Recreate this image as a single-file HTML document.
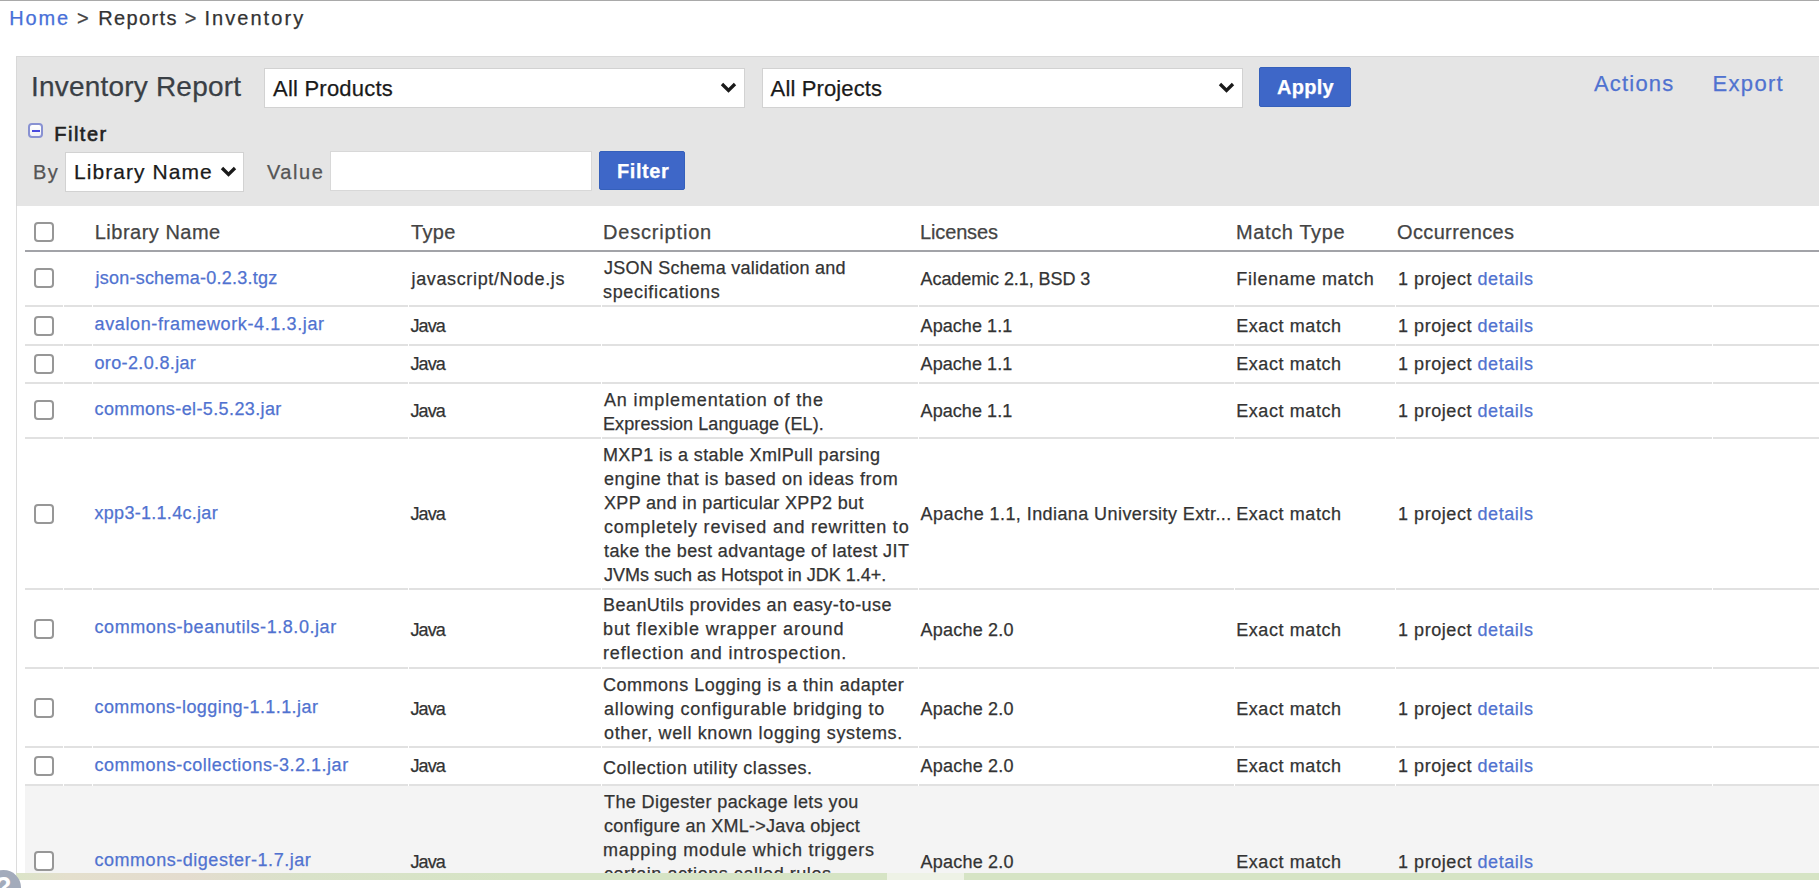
<!DOCTYPE html>
<html><head><meta charset="utf-8"><style>
html,body{margin:0;padding:0;background:#fff;width:1819px;height:888px;overflow:hidden;position:relative}
.t{position:absolute;white-space:nowrap;font-family:"Liberation Sans", sans-serif;-webkit-text-stroke:0.25px currentColor}
.r{position:absolute}
</style></head><body>
<div class="r" style="left:0px;top:0px;width:1819px;height:1px;background:#a9a9a9"></div>
<div class="t" style="left:9.2px;top:8px;font-size:20px;line-height:20px;color:#4870d8;font-weight:400;letter-spacing:1.90px;">Home</div>
<div class="t" style="left:76.9px;top:8px;font-size:20px;line-height:20px;color:#444;font-weight:400;letter-spacing:0.40px;">&gt;</div>
<div class="t" style="left:98.3px;top:8px;font-size:20px;line-height:20px;color:#333;font-weight:400;letter-spacing:1.35px;">Reports</div>
<div class="t" style="left:184.7px;top:8px;font-size:20px;line-height:20px;color:#444;font-weight:400;letter-spacing:0.40px;">&gt;</div>
<div class="t" style="left:204.4px;top:8px;font-size:20px;line-height:20px;color:#333;font-weight:400;letter-spacing:2.06px;">Inventory</div>
<div class="r" style="left:16px;top:56px;width:1803px;height:150px;background:#e5e5e5;border-top:1px solid #d8d8d8;border-left:1px solid #d8d8d8;box-sizing:border-box"></div>
<div class="r" style="left:16px;top:206px;width:1px;height:668px;background:#dcdcdc"></div>
<div class="t" style="left:31.0px;top:73px;font-size:28px;line-height:28px;color:#3a3f45;font-weight:400;letter-spacing:0.20px;">Inventory Report</div>
<div class="r" style="left:264px;top:68px;width:481px;height:40px;background:#fff;border:1px solid #d2d2d2;box-sizing:border-box"></div>
<div class="t" style="left:273.0px;top:78px;font-size:22px;line-height:22px;color:#1a1a1a;font-weight:400;letter-spacing:0.22px;">All Products</div>
<svg class="r" style="left:720px;top:82px" width="17" height="12" viewBox="0 0 17 12"><path d="M2 2 L8.5 8.5 L15 2" fill="none" stroke="#1a1a1a" stroke-width="3.3"/></svg>
<div class="r" style="left:762px;top:68px;width:481px;height:40px;background:#fff;border:1px solid #d2d2d2;box-sizing:border-box"></div>
<div class="t" style="left:770.6px;top:78px;font-size:22px;line-height:22px;color:#1a1a1a;font-weight:400;letter-spacing:0.13px;">All Projects</div>
<svg class="r" style="left:1218px;top:82px" width="17" height="12" viewBox="0 0 17 12"><path d="M2 2 L8.5 8.5 L15 2" fill="none" stroke="#1a1a1a" stroke-width="3.3"/></svg>
<div class="r" style="left:1259px;top:67px;width:92px;height:40px;background:#3e67c8;border:1px solid #3560bb;border-radius:2px;box-sizing:border-box"></div>
<div class="t" style="left:1277.0px;top:77px;font-size:20px;line-height:20px;color:#fff;font-weight:700;letter-spacing:0.25px;">Apply</div>
<div class="t" style="left:1594.0px;top:73px;font-size:22px;line-height:22px;color:#5072d0;font-weight:400;letter-spacing:1.18px;">Actions</div>
<div class="t" style="left:1712.6px;top:73px;font-size:22px;line-height:22px;color:#5072d0;font-weight:400;letter-spacing:1.30px;">Export</div>
<div class="r" style="left:28px;top:123px;width:15px;height:15px;border:2px solid #8891d2;border-radius:4px;box-sizing:border-box;background:linear-gradient(#fff,#f0f0f6)"></div>
<div class="r" style="left:32px;top:130px;width:8px;height:2px;background:#4a4ade"></div>
<div class="t" style="left:54.2px;top:124px;font-size:20px;line-height:20px;color:#222;font-weight:400;letter-spacing:1.52px;-webkit-text-stroke:0.6px #222">Filter</div>
<div class="t" style="left:33.1px;top:162px;font-size:20px;line-height:20px;color:#555;font-weight:400;letter-spacing:1.40px;">By</div>
<div class="r" style="left:65px;top:152px;width:179px;height:40px;background:#fff;border:1px solid #d2d2d2;box-sizing:border-box"></div>
<div class="t" style="left:74.1px;top:161px;font-size:21px;line-height:21px;color:#1a1a1a;font-weight:400;letter-spacing:1.05px;">Library Name</div>
<svg class="r" style="left:219.5px;top:166px" width="17" height="12" viewBox="0 0 17 12"><path d="M2 2 L8.5 8.5 L15 2" fill="none" stroke="#1a1a1a" stroke-width="3.3"/></svg>
<div class="t" style="left:266.9px;top:162px;font-size:20px;line-height:20px;color:#555;font-weight:400;letter-spacing:1.60px;">Value</div>
<div class="r" style="left:330px;top:151px;width:262px;height:40px;background:#fff;border:1px solid #d8d8d8;box-sizing:border-box"></div>
<div class="r" style="left:599px;top:151px;width:86px;height:39px;background:#3e67c8;border:1px solid #3560bb;border-radius:2px;box-sizing:border-box"></div>
<div class="t" style="left:617.0px;top:161px;font-size:20px;line-height:20px;color:#fff;font-weight:700;letter-spacing:0.56px;">Filter</div>
<div class="r" style="left:34px;top:222px;width:20px;height:20px;border:2px solid #979797;border-radius:4px;box-sizing:border-box;background:#fff"></div>
<div class="t" style="left:94.7px;top:222px;font-size:20px;line-height:20px;color:#444;font-weight:400;letter-spacing:0.50px;">Library Name</div>
<div class="t" style="left:411.0px;top:222px;font-size:20px;line-height:20px;color:#444;font-weight:400;letter-spacing:0.33px;">Type</div>
<div class="t" style="left:603.0px;top:222px;font-size:20px;line-height:20px;color:#444;font-weight:400;letter-spacing:0.82px;">Description</div>
<div class="t" style="left:920.0px;top:222px;font-size:20px;line-height:20px;color:#444;font-weight:400;letter-spacing:-0.14px;">Licenses</div>
<div class="t" style="left:1236.0px;top:222px;font-size:20px;line-height:20px;color:#444;font-weight:400;letter-spacing:0.62px;">Match Type</div>
<div class="t" style="left:1397.0px;top:222px;font-size:20px;line-height:20px;color:#444;font-weight:400;letter-spacing:0.36px;">Occurrences</div>
<div class="r" style="left:25px;top:250px;width:1794px;height:2px;background:#a2a3a8"></div>
<div class="r" style="left:0;top:0;width:1819px;height:873px;overflow:hidden">
<div class="r" style="left:34px;top:268px;width:20px;height:20px;border:2px solid #979797;border-radius:4px;box-sizing:border-box;background:#fff"></div>
<div class="t" style="left:95.5px;top:269px;font-size:18px;line-height:18px;color:#5072d0;font-weight:400;letter-spacing:0.23px;">json-schema-0.2.3.tgz</div>
<div class="t" style="left:411.5px;top:270px;font-size:18px;line-height:18px;color:#333;font-weight:400;letter-spacing:0.64px;">javascript/Node.js</div>
<div class="t" style="left:604.0px;top:259px;font-size:18px;line-height:18px;color:#333;font-weight:400;letter-spacing:0.26px;">JSON Schema validation and</div>
<div class="t" style="left:603.0px;top:283px;font-size:18px;line-height:18px;color:#333;font-weight:400;letter-spacing:0.66px;">specifications</div>
<div class="t" style="left:920.6px;top:270px;font-size:18px;line-height:18px;color:#333;font-weight:400;letter-spacing:-0.08px;">Academic 2.1, BSD 3</div>
<div class="t" style="left:1236.2px;top:270px;font-size:18px;line-height:18px;color:#333;font-weight:400;letter-spacing:0.74px;">Filename match</div>
<div class="t" style="left:1398.0px;top:270px;font-size:18px;line-height:18px;color:#333;font-weight:400;letter-spacing:0.55px;">1 project <span style="color:#5072d0">details</span></div>
<div class="r" style="left:25px;top:305px;width:38px;height:2px;background:#e1e1e1"></div>
<div class="r" style="left:64px;top:305px;width:28px;height:2px;background:#e1e1e1"></div>
<div class="r" style="left:93px;top:305px;width:315px;height:2px;background:#e1e1e1"></div>
<div class="r" style="left:409px;top:305px;width:192px;height:2px;background:#e1e1e1"></div>
<div class="r" style="left:602px;top:305px;width:316px;height:2px;background:#e1e1e1"></div>
<div class="r" style="left:919px;top:305px;width:315px;height:2px;background:#e1e1e1"></div>
<div class="r" style="left:1235px;top:305px;width:160px;height:2px;background:#e1e1e1"></div>
<div class="r" style="left:1396px;top:305px;width:316px;height:2px;background:#e1e1e1"></div>
<div class="r" style="left:1713px;top:305px;width:106px;height:2px;background:#e1e1e1"></div>
<div class="r" style="left:34px;top:316px;width:20px;height:20px;border:2px solid #979797;border-radius:4px;box-sizing:border-box;background:#fff"></div>
<div class="t" style="left:94.5px;top:315px;font-size:18px;line-height:18px;color:#5072d0;font-weight:400;letter-spacing:0.62px;">avalon-framework-4.1.3.jar</div>
<div class="t" style="left:410.5px;top:317px;font-size:18px;line-height:18px;color:#333;font-weight:400;letter-spacing:-0.93px;">Java</div>
<div class="t" style="left:920.6px;top:317px;font-size:18px;line-height:18px;color:#333;font-weight:400;letter-spacing:0.06px;">Apache 1.1</div>
<div class="t" style="left:1236.2px;top:317px;font-size:18px;line-height:18px;color:#333;font-weight:400;letter-spacing:0.59px;">Exact match</div>
<div class="t" style="left:1398.0px;top:317px;font-size:18px;line-height:18px;color:#333;font-weight:400;letter-spacing:0.55px;">1 project <span style="color:#5072d0">details</span></div>
<div class="r" style="left:25px;top:344px;width:38px;height:2px;background:#e1e1e1"></div>
<div class="r" style="left:64px;top:344px;width:28px;height:2px;background:#e1e1e1"></div>
<div class="r" style="left:93px;top:344px;width:315px;height:2px;background:#e1e1e1"></div>
<div class="r" style="left:409px;top:344px;width:192px;height:2px;background:#e1e1e1"></div>
<div class="r" style="left:602px;top:344px;width:316px;height:2px;background:#e1e1e1"></div>
<div class="r" style="left:919px;top:344px;width:315px;height:2px;background:#e1e1e1"></div>
<div class="r" style="left:1235px;top:344px;width:160px;height:2px;background:#e1e1e1"></div>
<div class="r" style="left:1396px;top:344px;width:316px;height:2px;background:#e1e1e1"></div>
<div class="r" style="left:1713px;top:344px;width:106px;height:2px;background:#e1e1e1"></div>
<div class="r" style="left:34px;top:354px;width:20px;height:20px;border:2px solid #979797;border-radius:4px;box-sizing:border-box;background:#fff"></div>
<div class="t" style="left:94.5px;top:354px;font-size:18px;line-height:18px;color:#5072d0;font-weight:400;letter-spacing:0.36px;">oro-2.0.8.jar</div>
<div class="t" style="left:410.5px;top:355px;font-size:18px;line-height:18px;color:#333;font-weight:400;letter-spacing:-0.93px;">Java</div>
<div class="t" style="left:920.6px;top:355px;font-size:18px;line-height:18px;color:#333;font-weight:400;letter-spacing:0.06px;">Apache 1.1</div>
<div class="t" style="left:1236.2px;top:355px;font-size:18px;line-height:18px;color:#333;font-weight:400;letter-spacing:0.59px;">Exact match</div>
<div class="t" style="left:1398.0px;top:355px;font-size:18px;line-height:18px;color:#333;font-weight:400;letter-spacing:0.55px;">1 project <span style="color:#5072d0">details</span></div>
<div class="r" style="left:25px;top:382px;width:38px;height:2px;background:#e1e1e1"></div>
<div class="r" style="left:64px;top:382px;width:28px;height:2px;background:#e1e1e1"></div>
<div class="r" style="left:93px;top:382px;width:315px;height:2px;background:#e1e1e1"></div>
<div class="r" style="left:409px;top:382px;width:192px;height:2px;background:#e1e1e1"></div>
<div class="r" style="left:602px;top:382px;width:316px;height:2px;background:#e1e1e1"></div>
<div class="r" style="left:919px;top:382px;width:315px;height:2px;background:#e1e1e1"></div>
<div class="r" style="left:1235px;top:382px;width:160px;height:2px;background:#e1e1e1"></div>
<div class="r" style="left:1396px;top:382px;width:316px;height:2px;background:#e1e1e1"></div>
<div class="r" style="left:1713px;top:382px;width:106px;height:2px;background:#e1e1e1"></div>
<div class="r" style="left:34px;top:400px;width:20px;height:20px;border:2px solid #979797;border-radius:4px;box-sizing:border-box;background:#fff"></div>
<div class="t" style="left:94.5px;top:400px;font-size:18px;line-height:18px;color:#5072d0;font-weight:400;letter-spacing:0.39px;">commons-el-5.5.23.jar</div>
<div class="t" style="left:410.5px;top:402px;font-size:18px;line-height:18px;color:#333;font-weight:400;letter-spacing:-0.93px;">Java</div>
<div class="t" style="left:604.0px;top:391px;font-size:18px;line-height:18px;color:#333;font-weight:400;letter-spacing:0.86px;">An implementation of the</div>
<div class="t" style="left:603.0px;top:415px;font-size:18px;line-height:18px;color:#333;font-weight:400;letter-spacing:0.11px;">Expression Language (EL).</div>
<div class="t" style="left:920.6px;top:402px;font-size:18px;line-height:18px;color:#333;font-weight:400;letter-spacing:0.06px;">Apache 1.1</div>
<div class="t" style="left:1236.2px;top:402px;font-size:18px;line-height:18px;color:#333;font-weight:400;letter-spacing:0.59px;">Exact match</div>
<div class="t" style="left:1398.0px;top:402px;font-size:18px;line-height:18px;color:#333;font-weight:400;letter-spacing:0.55px;">1 project <span style="color:#5072d0">details</span></div>
<div class="r" style="left:25px;top:437px;width:38px;height:2px;background:#e1e1e1"></div>
<div class="r" style="left:64px;top:437px;width:28px;height:2px;background:#e1e1e1"></div>
<div class="r" style="left:93px;top:437px;width:315px;height:2px;background:#e1e1e1"></div>
<div class="r" style="left:409px;top:437px;width:192px;height:2px;background:#e1e1e1"></div>
<div class="r" style="left:602px;top:437px;width:316px;height:2px;background:#e1e1e1"></div>
<div class="r" style="left:919px;top:437px;width:315px;height:2px;background:#e1e1e1"></div>
<div class="r" style="left:1235px;top:437px;width:160px;height:2px;background:#e1e1e1"></div>
<div class="r" style="left:1396px;top:437px;width:316px;height:2px;background:#e1e1e1"></div>
<div class="r" style="left:1713px;top:437px;width:106px;height:2px;background:#e1e1e1"></div>
<div class="r" style="left:34px;top:504px;width:20px;height:20px;border:2px solid #979797;border-radius:4px;box-sizing:border-box;background:#fff"></div>
<div class="t" style="left:94.5px;top:504px;font-size:18px;line-height:18px;color:#5072d0;font-weight:400;letter-spacing:0.29px;">xpp3-1.1.4c.jar</div>
<div class="t" style="left:410.5px;top:505px;font-size:18px;line-height:18px;color:#333;font-weight:400;letter-spacing:-0.93px;">Java</div>
<div class="t" style="left:603.0px;top:446px;font-size:18px;line-height:18px;color:#333;font-weight:400;letter-spacing:0.38px;">MXP1 is a stable XmlPull parsing</div>
<div class="t" style="left:604.0px;top:470px;font-size:18px;line-height:18px;color:#333;font-weight:400;letter-spacing:0.56px;">engine that is based on ideas from</div>
<div class="t" style="left:604.0px;top:494px;font-size:18px;line-height:18px;color:#333;font-weight:400;letter-spacing:0.33px;">XPP and in particular XPP2 but</div>
<div class="t" style="left:604.0px;top:518px;font-size:18px;line-height:18px;color:#333;font-weight:400;letter-spacing:0.78px;">completely revised and rewritten to</div>
<div class="t" style="left:604.0px;top:542px;font-size:18px;line-height:18px;color:#333;font-weight:400;letter-spacing:0.41px;">take the best advantage of latest JIT</div>
<div class="t" style="left:604.0px;top:566px;font-size:18px;line-height:18px;color:#333;font-weight:400;letter-spacing:-0.01px;">JVMs such as Hotspot in JDK 1.4+.</div>
<div class="t" style="left:920.6px;top:505px;font-size:18px;line-height:18px;color:#333;font-weight:400;letter-spacing:0.42px;">Apache 1.1, Indiana University Extr...</div>
<div class="t" style="left:1236.2px;top:505px;font-size:18px;line-height:18px;color:#333;font-weight:400;letter-spacing:0.59px;">Exact match</div>
<div class="t" style="left:1398.0px;top:505px;font-size:18px;line-height:18px;color:#333;font-weight:400;letter-spacing:0.55px;">1 project <span style="color:#5072d0">details</span></div>
<div class="r" style="left:25px;top:588px;width:38px;height:2px;background:#e1e1e1"></div>
<div class="r" style="left:64px;top:588px;width:28px;height:2px;background:#e1e1e1"></div>
<div class="r" style="left:93px;top:588px;width:315px;height:2px;background:#e1e1e1"></div>
<div class="r" style="left:409px;top:588px;width:192px;height:2px;background:#e1e1e1"></div>
<div class="r" style="left:602px;top:588px;width:316px;height:2px;background:#e1e1e1"></div>
<div class="r" style="left:919px;top:588px;width:315px;height:2px;background:#e1e1e1"></div>
<div class="r" style="left:1235px;top:588px;width:160px;height:2px;background:#e1e1e1"></div>
<div class="r" style="left:1396px;top:588px;width:316px;height:2px;background:#e1e1e1"></div>
<div class="r" style="left:1713px;top:588px;width:106px;height:2px;background:#e1e1e1"></div>
<div class="r" style="left:34px;top:619px;width:20px;height:20px;border:2px solid #979797;border-radius:4px;box-sizing:border-box;background:#fff"></div>
<div class="t" style="left:94.5px;top:618px;font-size:18px;line-height:18px;color:#5072d0;font-weight:400;letter-spacing:0.56px;">commons-beanutils-1.8.0.jar</div>
<div class="t" style="left:410.5px;top:621px;font-size:18px;line-height:18px;color:#333;font-weight:400;letter-spacing:-0.93px;">Java</div>
<div class="t" style="left:603.0px;top:596px;font-size:18px;line-height:18px;color:#333;font-weight:400;letter-spacing:0.45px;">BeanUtils provides an easy-to-use</div>
<div class="t" style="left:603.0px;top:620px;font-size:18px;line-height:18px;color:#333;font-weight:400;letter-spacing:0.90px;">but flexible wrapper around</div>
<div class="t" style="left:603.0px;top:644px;font-size:18px;line-height:18px;color:#333;font-weight:400;letter-spacing:0.83px;">reflection and introspection.</div>
<div class="t" style="left:920.6px;top:621px;font-size:18px;line-height:18px;color:#333;font-weight:400;letter-spacing:0.21px;">Apache 2.0</div>
<div class="t" style="left:1236.2px;top:621px;font-size:18px;line-height:18px;color:#333;font-weight:400;letter-spacing:0.59px;">Exact match</div>
<div class="t" style="left:1398.0px;top:621px;font-size:18px;line-height:18px;color:#333;font-weight:400;letter-spacing:0.55px;">1 project <span style="color:#5072d0">details</span></div>
<div class="r" style="left:25px;top:667px;width:38px;height:2px;background:#e1e1e1"></div>
<div class="r" style="left:64px;top:667px;width:28px;height:2px;background:#e1e1e1"></div>
<div class="r" style="left:93px;top:667px;width:315px;height:2px;background:#e1e1e1"></div>
<div class="r" style="left:409px;top:667px;width:192px;height:2px;background:#e1e1e1"></div>
<div class="r" style="left:602px;top:667px;width:316px;height:2px;background:#e1e1e1"></div>
<div class="r" style="left:919px;top:667px;width:315px;height:2px;background:#e1e1e1"></div>
<div class="r" style="left:1235px;top:667px;width:160px;height:2px;background:#e1e1e1"></div>
<div class="r" style="left:1396px;top:667px;width:316px;height:2px;background:#e1e1e1"></div>
<div class="r" style="left:1713px;top:667px;width:106px;height:2px;background:#e1e1e1"></div>
<div class="r" style="left:34px;top:698px;width:20px;height:20px;border:2px solid #979797;border-radius:4px;box-sizing:border-box;background:#fff"></div>
<div class="t" style="left:94.5px;top:698px;font-size:18px;line-height:18px;color:#5072d0;font-weight:400;letter-spacing:0.43px;">commons-logging-1.1.1.jar</div>
<div class="t" style="left:410.5px;top:700px;font-size:18px;line-height:18px;color:#333;font-weight:400;letter-spacing:-0.93px;">Java</div>
<div class="t" style="left:603.0px;top:676px;font-size:18px;line-height:18px;color:#333;font-weight:400;letter-spacing:0.52px;">Commons Logging is a thin adapter</div>
<div class="t" style="left:604.0px;top:700px;font-size:18px;line-height:18px;color:#333;font-weight:400;letter-spacing:0.72px;">allowing configurable bridging to</div>
<div class="t" style="left:604.0px;top:724px;font-size:18px;line-height:18px;color:#333;font-weight:400;letter-spacing:0.64px;">other, well known logging systems.</div>
<div class="t" style="left:920.6px;top:700px;font-size:18px;line-height:18px;color:#333;font-weight:400;letter-spacing:0.21px;">Apache 2.0</div>
<div class="t" style="left:1236.2px;top:700px;font-size:18px;line-height:18px;color:#333;font-weight:400;letter-spacing:0.59px;">Exact match</div>
<div class="t" style="left:1398.0px;top:700px;font-size:18px;line-height:18px;color:#333;font-weight:400;letter-spacing:0.55px;">1 project <span style="color:#5072d0">details</span></div>
<div class="r" style="left:25px;top:746px;width:38px;height:2px;background:#e1e1e1"></div>
<div class="r" style="left:64px;top:746px;width:28px;height:2px;background:#e1e1e1"></div>
<div class="r" style="left:93px;top:746px;width:315px;height:2px;background:#e1e1e1"></div>
<div class="r" style="left:409px;top:746px;width:192px;height:2px;background:#e1e1e1"></div>
<div class="r" style="left:602px;top:746px;width:316px;height:2px;background:#e1e1e1"></div>
<div class="r" style="left:919px;top:746px;width:315px;height:2px;background:#e1e1e1"></div>
<div class="r" style="left:1235px;top:746px;width:160px;height:2px;background:#e1e1e1"></div>
<div class="r" style="left:1396px;top:746px;width:316px;height:2px;background:#e1e1e1"></div>
<div class="r" style="left:1713px;top:746px;width:106px;height:2px;background:#e1e1e1"></div>
<div class="r" style="left:34px;top:756px;width:20px;height:20px;border:2px solid #979797;border-radius:4px;box-sizing:border-box;background:#fff"></div>
<div class="t" style="left:94.5px;top:756px;font-size:18px;line-height:18px;color:#5072d0;font-weight:400;letter-spacing:0.52px;">commons-collections-3.2.1.jar</div>
<div class="t" style="left:410.5px;top:757px;font-size:18px;line-height:18px;color:#333;font-weight:400;letter-spacing:-0.93px;">Java</div>
<div class="t" style="left:603.0px;top:759px;font-size:18px;line-height:18px;color:#333;font-weight:400;letter-spacing:0.54px;">Collection utility classes.</div>
<div class="t" style="left:920.6px;top:757px;font-size:18px;line-height:18px;color:#333;font-weight:400;letter-spacing:0.21px;">Apache 2.0</div>
<div class="t" style="left:1236.2px;top:757px;font-size:18px;line-height:18px;color:#333;font-weight:400;letter-spacing:0.59px;">Exact match</div>
<div class="t" style="left:1398.0px;top:757px;font-size:18px;line-height:18px;color:#333;font-weight:400;letter-spacing:0.55px;">1 project <span style="color:#5072d0">details</span></div>
<div class="r" style="left:25px;top:784px;width:38px;height:2px;background:#e1e1e1"></div>
<div class="r" style="left:64px;top:784px;width:28px;height:2px;background:#e1e1e1"></div>
<div class="r" style="left:93px;top:784px;width:315px;height:2px;background:#e1e1e1"></div>
<div class="r" style="left:409px;top:784px;width:192px;height:2px;background:#e1e1e1"></div>
<div class="r" style="left:602px;top:784px;width:316px;height:2px;background:#e1e1e1"></div>
<div class="r" style="left:919px;top:784px;width:315px;height:2px;background:#e1e1e1"></div>
<div class="r" style="left:1235px;top:784px;width:160px;height:2px;background:#e1e1e1"></div>
<div class="r" style="left:1396px;top:784px;width:316px;height:2px;background:#e1e1e1"></div>
<div class="r" style="left:1713px;top:784px;width:106px;height:2px;background:#e1e1e1"></div>
<div class="r" style="left:25px;top:786px;width:1794px;height:151px;background:#f4f4f4"></div>
<div class="r" style="left:34px;top:851px;width:20px;height:20px;border:2px solid #979797;border-radius:4px;box-sizing:border-box;background:#fff"></div>
<div class="t" style="left:94.5px;top:851px;font-size:18px;line-height:18px;color:#5072d0;font-weight:400;letter-spacing:0.53px;">commons-digester-1.7.jar</div>
<div class="t" style="left:410.5px;top:853px;font-size:18px;line-height:18px;color:#333;font-weight:400;letter-spacing:-0.93px;">Java</div>
<div class="t" style="left:604.0px;top:793px;font-size:18px;line-height:18px;color:#333;font-weight:400;letter-spacing:0.40px;">The Digester package lets you</div>
<div class="t" style="left:604.0px;top:817px;font-size:18px;line-height:18px;color:#333;font-weight:400;letter-spacing:0.25px;">configure an XML-&gt;Java object</div>
<div class="t" style="left:603.0px;top:841px;font-size:18px;line-height:18px;color:#333;font-weight:400;letter-spacing:0.78px;">mapping module which triggers</div>
<div class="t" style="left:604.0px;top:865px;font-size:18px;line-height:18px;color:#333;font-weight:400;letter-spacing:0.55px;">certain actions called rules</div>
<div class="t" style="left:604.0px;top:889px;font-size:18px;line-height:18px;color:#333;font-weight:400;letter-spacing:0.50px;">when certain patterns of XML</div>
<div class="t" style="left:604.0px;top:913px;font-size:18px;line-height:18px;color:#333;font-weight:400;letter-spacing:0.50px;">elements are recognized.</div>
<div class="t" style="left:920.6px;top:853px;font-size:18px;line-height:18px;color:#333;font-weight:400;letter-spacing:0.21px;">Apache 2.0</div>
<div class="t" style="left:1236.2px;top:853px;font-size:18px;line-height:18px;color:#333;font-weight:400;letter-spacing:0.59px;">Exact match</div>
<div class="t" style="left:1398.0px;top:853px;font-size:18px;line-height:18px;color:#333;font-weight:400;letter-spacing:0.55px;">1 project <span style="color:#5072d0">details</span></div>
</div>
<div class="r" style="left:16px;top:873px;width:1803px;height:7px;background:linear-gradient(90deg,#dbe4c8 0px,#e4dfcd 50px,#e4dccf 170px,#d9e2c9 290px,#d6e4c5 500px,#d6e4c5 1803px)"></div>
<div class="r" style="left:887px;top:873px;width:77px;height:7px;background:#eef2e6"></div>
<div class="r" style="left:-14px;top:870px;width:35px;height:35px;border-radius:50%;background:#a3abbb;overflow:hidden"><div style="position:absolute;left:9px;top:4px;font:bold 27px/27px 'Liberation Sans',sans-serif;color:#fff">?</div></div>
</body></html>
